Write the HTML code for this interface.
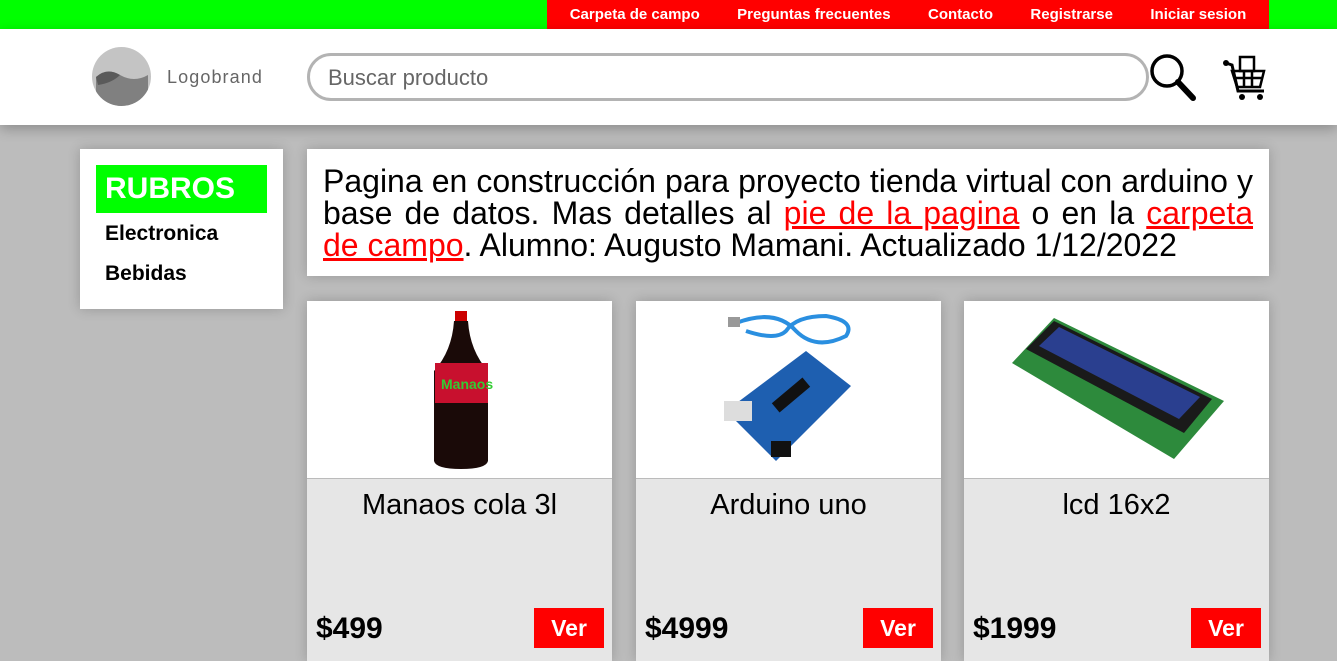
<!DOCTYPE html>
<html><head><meta charset="utf-8"><style>
*{margin:0;padding:0;box-sizing:border-box}
body{width:1337px;height:649px;overflow:hidden;background:#bcbcbc;font-family:"Liberation Sans",Arial,sans-serif;position:relative}
.top{position:absolute;left:0;top:0;width:1337px;height:29px;background:#00ff00}
.nav{position:absolute;left:547px;top:0;width:722px;height:29px;background:#ff0000;display:flex;justify-content:space-around;align-items:center;padding:0 4px}
.nav span{color:#fff;font-weight:bold;font-size:15px}
.hdr{position:absolute;left:0;top:29px;width:1337px;height:96px;background:#fff;box-shadow:0 4px 12px rgba(0,0,0,.25)}
.logo{position:absolute;left:92px;top:18px;width:59px;height:59px;border-radius:50%;background:#c4c4c4;overflow:hidden}
.brand{position:absolute;left:167px;top:38px;font-size:18px;color:#666;letter-spacing:1.1px}
.search{position:absolute;left:307px;top:24px;width:842px;height:48px;border:3px solid #b3b3b3;border-radius:24px;font-size:22px;color:#666;padding:9px 18px}
.box{position:absolute;background:#fff;box-shadow:0 0 12px rgba(0,0,0,.2)}
.rub{left:80px;top:149px;width:203px;height:160px}
.rub .t{position:absolute;left:16px;top:16px;width:171px;height:48px;background:#00ff00;color:#fff;font-weight:bold;font-size:30px;padding:7px 9px}
.rub .i{position:absolute;left:25px;font-weight:bold;font-size:21px}
.info{left:307px;top:149px;width:962px;height:127px;padding:16px 16px;font-size:32px;line-height:32px;white-space:nowrap}
.info div.j{text-align:justify;text-align-last:justify}
.info a{color:#f00;text-decoration:underline}
.card{position:absolute;top:301px;width:305px;height:360px;background:#e6e6e6;box-shadow:0 0 12px rgba(0,0,0,.2)}
.card .img{height:178px;background:#fff;border-bottom:1px solid #bbb;position:relative}
.card .n{text-align:center;font-size:29px;margin-top:10px}
.card .p{position:absolute;left:9px;top:311px;font-weight:bold;font-size:30px}
.card .v{position:absolute;right:8px;top:307px;width:70px;height:40px;background:#f00;color:#fff;font-weight:bold;font-size:23px;text-align:center;line-height:40px}
</style></head><body>
<div class="top"></div>
<div class="nav"><span>Carpeta de campo</span><span>Preguntas frecuentes</span><span>Contacto</span><span>Registrarse</span><span>Iniciar sesion</span></div>
<div class="hdr">
 <div class="logo"><svg width="59" height="59"><path d="M4 30 Q15 20 28 28 Q42 36 56 28 L56 59 L4 59Z" fill="#808080"/><path d="M4 30 Q15 20 28 28 Q20 36 6 38Z" fill="#5a5a5a"/></svg></div>
 <div class="brand">Logobrand</div>
 <div class="search">Buscar producto</div>
 <svg style="position:absolute;left:1147px;top:22px" width="52" height="52"><circle cx="20" cy="20" r="15" fill="none" stroke="#000" stroke-width="3.5"/><line x1="31" y1="31" x2="46" y2="47" stroke="#000" stroke-width="6" stroke-linecap="round"/></svg>
 <svg style="position:absolute;left:1222px;top:24px" width="48" height="50"><path d="M4 10 L10 12 L16 38 L42 38" fill="none" stroke="#000" stroke-width="3"/><rect x="18" y="4" width="14" height="14" fill="none" stroke="#000" stroke-width="2.5"/><path d="M10 18 L42 18 L38 34 L15 34Z M14 25 H40 M22 18 V34 M30 18 V34" fill="none" stroke="#000" stroke-width="2.5"/><circle cx="20" cy="44" r="3" /><circle cx="38" cy="44" r="3"/><circle cx="4" cy="10" r="3"/></svg>
</div>
<div class="box rub"><div class="t">RUBROS</div><div class="i" style="top:73px">Electronica</div><div class="i" style="top:113px">Bebidas</div></div>
<div class="box info"><div class="j">Pagina en construcción para proyecto tienda virtual con arduino y</div><div class="j">base de datos. Mas detalles al <a>pie de la pagina</a> o en la <a>carpeta</a></div><div><a>de campo</a>. Alumno: Augusto Mamani. Actualizado 1/12/2022</div></div>
<div class="card" style="left:307px"><div class="img"><svg width="305" height="178"><rect x="148" y="10" width="12" height="10" fill="#c00"/><path d="M147 20 h14 q2 30 20 50 v90 q-2 8 -27 8 q-25 0 -27 -8 v-90 q18 -20 20 -50z" fill="#1a0a08"/><rect x="128" y="62" width="53" height="40" fill="#c8102e"/><text x="134" y="88" font-size="14" fill="#3c3" font-weight="bold" font-family="Liberation Sans">Manaos</text></svg></div><div class="n">Manaos cola 3l</div><div class="p">$499</div><div class="v">Ver</div></div>
<div class="card" style="left:636px"><div class="img"><svg width="305" height="178"><path d="M100 22 q40 -15 60 8 q20 20 50 5 q10 -15 -20 -20 q-30 0 -40 15 q-10 10 -40 0" fill="none" stroke="#2a8fe0" stroke-width="4"/><rect x="92" y="16" width="12" height="10" fill="#999"/><path d="M90 110 L170 50 L215 85 L140 160Z" fill="#1e5fb0"/><rect x="135" y="88" width="40" height="12" fill="#111" transform="rotate(-40 155 94)"/><rect x="88" y="100" width="28" height="20" fill="#ddd"/><rect x="135" y="140" width="20" height="16" fill="#111"/></svg></div><div class="n">Arduino uno</div><div class="p">$4999</div><div class="v">Ver</div></div>
<div class="card" style="left:964px"><div class="img"><svg width="305" height="178"><path d="M48 62 L90 17 L260 100 L210 158Z" fill="#2d8a3c"/><path d="M62 48 L90 20 L248 98 L220 132Z" fill="#1a1a1a"/><path d="M75 45 L95 26 L236 96 L215 118Z" fill="#2a3f8f"/></svg></div><div class="n">lcd 16x2</div><div class="p">$1999</div><div class="v">Ver</div></div>
</body></html>
